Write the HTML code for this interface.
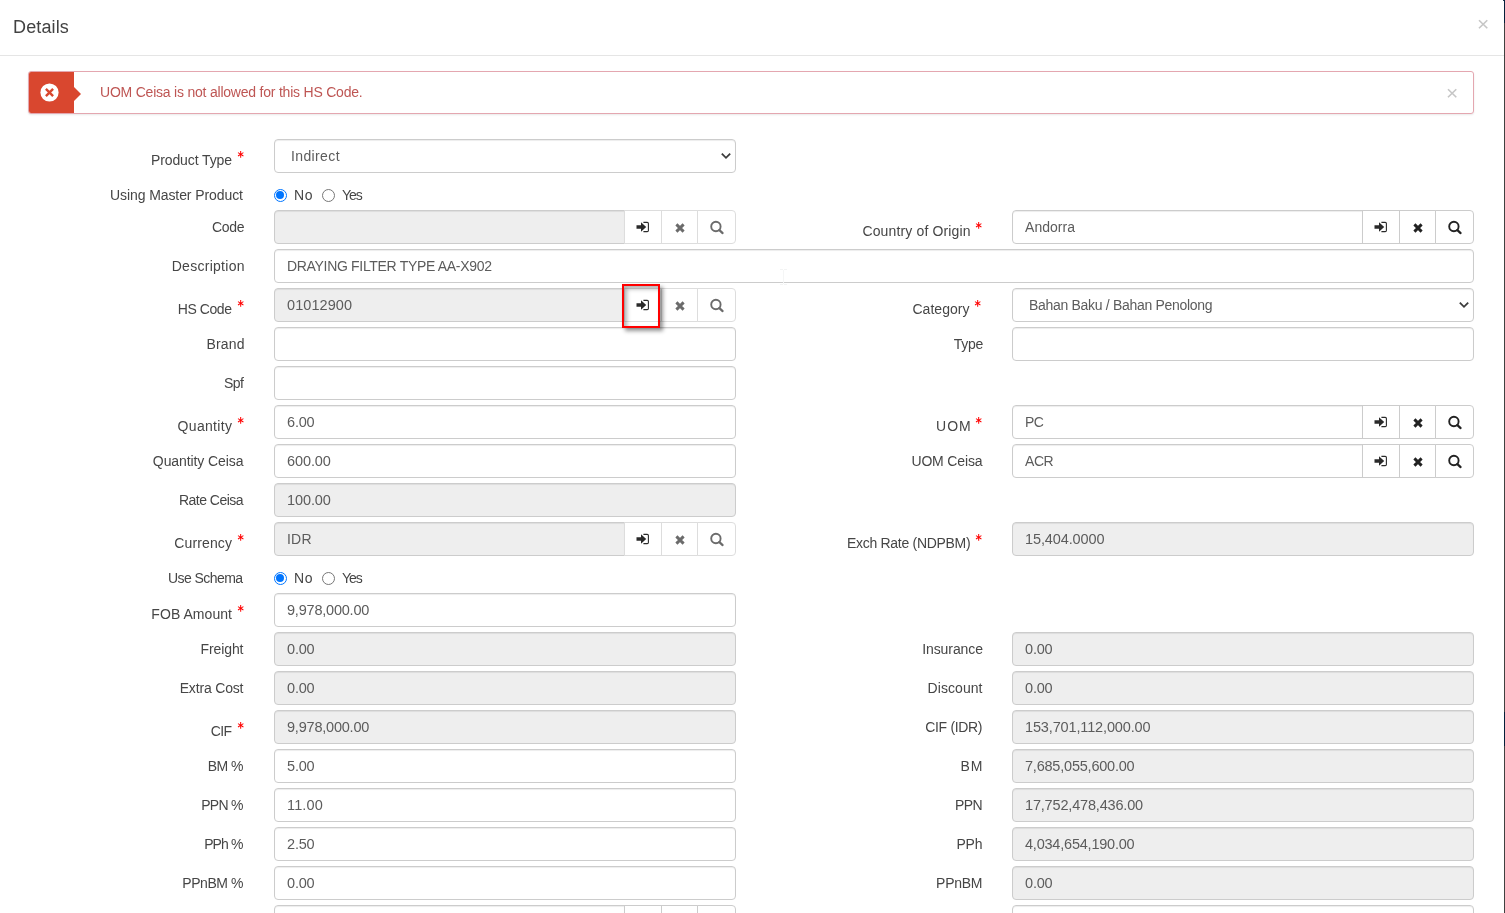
<!DOCTYPE html>
<html lang="en">
<head>
<meta charset="utf-8">
<title>Details</title>
<style>
*{box-sizing:border-box}
html,body{margin:0;padding:0}
body{width:1505px;height:913px;overflow:hidden;background:#fff;position:relative;font-family:"Liberation Sans",sans-serif;font-size:14px;color:#333;letter-spacing:0}
.edge{position:absolute;left:1504px;top:0;width:1px;height:913px;background:linear-gradient(#04203a 0,#04203a 23px,#404040 23px,#404040 712px,#04203a 712px,#04203a 746px,#404040 746px)}
.edge:before{content:"";position:absolute;left:-2px;top:0;width:2px;height:2px;background:radial-gradient(circle at 0 100%,transparent 1.6px,#04203a 2.2px)}
.hdr{position:absolute;left:0;top:0;width:1504px;height:56px;border-bottom:1px solid #e5e5e5}
.hdr h4{position:absolute;left:13px;top:16px;margin:0;font-size:18px;font-weight:400;line-height:22px;color:#424242;letter-spacing:0.13px}
.close{position:absolute;color:#c6c6c6;font-size:21px;line-height:20px;letter-spacing:0}
.alert{position:absolute;left:28px;top:71px;width:1446px;height:43px;border:1px solid #e4a7b0;border-radius:3px;background:#fff;box-shadow:0 1px 2px rgba(0,0,0,.09)}
.alert .blk{position:absolute;left:0;top:0;width:45px;height:41px;background:#d9472f;border-radius:2px 0 0 2px}
.alert .blk svg{position:absolute;left:11.4px;top:10.8px}
.alert .blk:after{content:"";position:absolute;left:45px;top:14.7px;border:7.35px solid transparent;border-left:7px solid #d9472f;border-right:0}
.alert .msg{position:absolute;left:71px;top:12px;line-height:16px;color:#be5553;white-space:nowrap;letter-spacing:-0.216px}
.lbl{position:absolute;text-align:right;white-space:nowrap;line-height:20px;color:#464646;margin:0}
.req{position:absolute;color:#f00;font-family:"DejaVu Sans",sans-serif;font-weight:bold;font-size:14.5px;line-height:16px;letter-spacing:0;transform:scaleX(.84);transform-origin:50% 50%}
.fc{position:absolute;height:34px;border:1px solid #ccc;border-radius:4px;background:#fff;padding:6px 12px;line-height:20px;color:#5c5c5c;white-space:nowrap;box-shadow:inset 0 1px 1px rgba(0,0,0,.075)}
.fc.dis{background:#eee}
.fc.grp{border-radius:4px 0 0 4px}
.fc.sel{padding-left:16px}
.fc.sel .car{position:absolute;right:3px;top:12.4px}
.btn{position:absolute;height:34px;border:1px solid #ccc;background:#fff;margin:0}
.btn svg{position:absolute;left:50%;top:50%}
.btn.last{border-radius:0 4px 4px 0}
.btn.gray{border-color:#ddd}
.rad{position:absolute;width:13px;height:13px;border:1.3px solid #767676;border-radius:50%;background:#fff}
.rad.on{border-color:#0075ff}
.rad.on:after{content:"";position:absolute;left:1.2px;top:1.2px;width:8px;height:8px;border-radius:50%;background:#0075ff}
.rt{position:absolute;line-height:20px;color:#464646}
.hl{position:absolute;left:622px;top:284px;width:38px;height:44px;border:2px solid #f00;box-shadow:3px 3px 4px rgba(0,0,0,.42),inset 3px 3px 4px rgba(0,0,0,.3)}
.ibeam{position:absolute;left:783px;top:270px;width:1px;height:14px;background:#f5f6f6}
.ibeam:before,.ibeam:after{content:"";position:absolute;left:-3px;width:7px;height:1px;background:linear-gradient(90deg,#f3f4f4 0,#f3f4f4 3px,transparent 3px,transparent 4px,#f3f4f4 4px)}
.ibeam:before{top:-1px}
.ibeam:after{top:14px}
.wrap{position:absolute;left:0;top:0;width:1505px;height:913px;will-change:transform}

</style>
</head>
<body>
<div class="wrap">
<div class="hdr"><h4>Details</h4><span class="close" style="left:1477px;top:13.5px">×</span></div>
<div class="alert"><div class="blk"><svg width="19" height="19" viewBox="0 0 19 19"><circle cx="9.5" cy="9.5" r="9.1" fill="#fff"/><path d="M5.9 5.9L13.1 13.1M13.1 5.9L5.9 13.1" stroke="#d9472f" stroke-width="2.4"/></svg></div><div class="msg">UOM Ceisa is not allowed for this HS Code.</div><span class="close" style="left:1417px;top:11px">×</span></div>
<label class="lbl" style="right:1273px;top:150px"><span style="letter-spacing:-0.109px;margin-right:0.109px">Product Type</span></label><span class="req" style="left:236.8px;top:147.6px">*</span>
<div class="fc sel" style="left:274px;top:139px;width:462px"><span style="letter-spacing:0.373px;margin-right:-0.373px">Indirect</span><svg class="car" width="12" height="8" viewBox="0 0 12 8"><path d="M1.8 1.6L6 5.8L10.2 1.6" fill="none" stroke="#3c3c3c" stroke-width="1.8"/></svg></div>
<label class="lbl" style="right:1262px;top:185px"><span style="letter-spacing:-0.085px;margin-right:0.085px">Using Master Product</span></label>
<div class="rad on" style="left:274px;top:189px"></div><div class="rt" style="left:294px;top:185px"><span style="letter-spacing:0.516px;margin-right:-0.516px">No</span></div>
<div class="rad" style="left:322px;top:189px"></div><div class="rt" style="left:342px;top:185px"><span style="letter-spacing:-1.086px;margin-right:1.086px">Yes</span></div>
<label class="lbl" style="right:1260.5px;top:217px"><span style="letter-spacing:-0.359px;margin-right:0.359px">Code</span></label>
<div class="fc dis grp" style="left:274px;top:210px;width:351px"></div>
<div class="btn gray" style="left:624px;top:210px;width:38px"><svg width="14" height="12" viewBox="0 0 14 12" style="margin:-6px 0 0 -6.8px"><path d="M0.5 4.2H5V1.2L10.2 6L5 10.8V7.8H0.5Z" fill="#2a2a2a"/><path d="M7.4 1.4H11.2Q12.4 1.4 12.4 2.6V9.4Q12.4 10.6 11.2 10.6H7.4" fill="none" stroke="#2a2a2a" stroke-width="1.1"/></svg></div>
<div class="btn gray" style="left:661px;top:210px;width:37px"><svg width="12" height="12" viewBox="0 0 12 12" style="margin:-5.5px 0 0 -6px"><path d="M2.4 2.4L9.6 9.6M9.6 2.4L2.4 9.6" stroke="#6b6b6b" stroke-width="2.9" fill="none"/></svg></div>
<div class="btn gray last" style="left:697px;top:210px;width:39px"><svg width="16" height="16" viewBox="0 0 16 16" style="margin:-6.9px 0 0 -8px"><circle cx="6.9" cy="6.5" r="4.7" fill="none" stroke="#6b6b6b" stroke-width="1.9"/><path d="M10.4 10.1L13.6 13.1" stroke="#6b6b6b" stroke-width="2.2" stroke-linecap="round"/></svg></div>
<label class="lbl" style="right:534.4px;top:221px"><span style="letter-spacing:0.150px;margin-right:-0.150px">Country of Origin</span></label><span class="req" style="left:975.0px;top:218.6px">*</span>
<div class="fc grp" style="left:1012px;top:210px;width:351px"><span style="letter-spacing:0.044px;margin-right:-0.044px">Andorra</span></div>
<div class="btn" style="left:1362px;top:210px;width:38px"><svg width="14" height="12" viewBox="0 0 14 12" style="margin:-6px 0 0 -6.8px"><path d="M0.5 4.2H5V1.2L10.2 6L5 10.8V7.8H0.5Z" fill="#2a2a2a"/><path d="M7.4 1.4H11.2Q12.4 1.4 12.4 2.6V9.4Q12.4 10.6 11.2 10.6H7.4" fill="none" stroke="#2a2a2a" stroke-width="1.1"/></svg></div>
<div class="btn" style="left:1399px;top:210px;width:37px"><svg width="12" height="12" viewBox="0 0 12 12" style="margin:-5.5px 0 0 -6px"><path d="M2.4 2.4L9.6 9.6M9.6 2.4L2.4 9.6" stroke="#222" stroke-width="2.9" fill="none"/></svg></div>
<div class="btn last" style="left:1435px;top:210px;width:39px"><svg width="16" height="16" viewBox="0 0 16 16" style="margin:-6.9px 0 0 -8px"><circle cx="6.9" cy="6.5" r="4.7" fill="none" stroke="#222" stroke-width="1.9"/><path d="M10.4 10.1L13.6 13.1" stroke="#222" stroke-width="2.2" stroke-linecap="round"/></svg></div>
<label class="lbl" style="right:1260.5px;top:256px"><span style="letter-spacing:0.275px;margin-right:-0.275px">Description</span></label>
<div class="fc" style="left:274px;top:249px;width:1200px"><span style="letter-spacing:-0.317px;margin-right:0.317px">DRAYING FILTER TYPE AA-X902</span></div>
<label class="lbl" style="right:1273px;top:299px"><span style="letter-spacing:-0.427px;margin-right:0.427px">HS Code</span></label><span class="req" style="left:236.8px;top:296.6px">*</span>
<div class="fc dis grp" style="left:274px;top:288px;width:351px"><span style="font-size:14.5px;letter-spacing:0.064px;margin-right:-0.064px">01012900</span></div>
<div class="btn gray" style="left:624px;top:288px;width:38px"><svg width="14" height="12" viewBox="0 0 14 12" style="margin:-6px 0 0 -6.8px"><path d="M0.5 4.2H5V1.2L10.2 6L5 10.8V7.8H0.5Z" fill="#2a2a2a"/><path d="M7.4 1.4H11.2Q12.4 1.4 12.4 2.6V9.4Q12.4 10.6 11.2 10.6H7.4" fill="none" stroke="#2a2a2a" stroke-width="1.1"/></svg></div>
<div class="btn gray" style="left:661px;top:288px;width:37px"><svg width="12" height="12" viewBox="0 0 12 12" style="margin:-5.5px 0 0 -6px"><path d="M2.4 2.4L9.6 9.6M9.6 2.4L2.4 9.6" stroke="#6b6b6b" stroke-width="2.9" fill="none"/></svg></div>
<div class="btn gray last" style="left:697px;top:288px;width:39px"><svg width="16" height="16" viewBox="0 0 16 16" style="margin:-6.9px 0 0 -8px"><circle cx="6.9" cy="6.5" r="4.7" fill="none" stroke="#6b6b6b" stroke-width="1.9"/><path d="M10.4 10.1L13.6 13.1" stroke="#6b6b6b" stroke-width="2.2" stroke-linecap="round"/></svg></div>
<label class="lbl" style="right:535.4px;top:299px"><span style="letter-spacing:0.058px;margin-right:-0.058px">Category</span></label><span class="req" style="left:974.0px;top:296.6px">*</span>
<div class="fc sel" style="left:1012px;top:288px;width:462px"><span style="letter-spacing:-0.306px;margin-right:0.306px">Bahan Baku / Bahan Penolong</span><svg class="car" width="12" height="8" viewBox="0 0 12 8"><path d="M1.8 1.6L6 5.8L10.2 1.6" fill="none" stroke="#3c3c3c" stroke-width="1.8"/></svg></div>
<label class="lbl" style="right:1260.5px;top:334px"><span style="letter-spacing:0.160px;margin-right:-0.160px">Brand</span></label>
<div class="fc" style="left:274px;top:327px;width:462px"></div>
<label class="lbl" style="right:521.8px;top:334px"><span style="letter-spacing:-0.281px;margin-right:0.281px">Type</span></label>
<div class="fc" style="left:1012px;top:327px;width:462px"></div>
<label class="lbl" style="right:1261.0px;top:373px"><span style="letter-spacing:-0.461px;margin-right:0.461px">Spf</span></label>
<div class="fc" style="left:274px;top:366px;width:462px"></div>
<label class="lbl" style="right:1273px;top:416px"><span style="letter-spacing:0.330px;margin-right:-0.330px">Quantity</span></label><span class="req" style="left:236.8px;top:413.6px">*</span>
<div class="fc" style="left:274px;top:405px;width:462px"><span style="font-size:14.5px;letter-spacing:-0.184px;margin-right:0.184px">6.00</span></div>
<label class="lbl" style="right:534.4px;top:416px"><span style="letter-spacing:0.922px;margin-right:-0.922px">UOM</span></label><span class="req" style="left:975.0px;top:413.6px">*</span>
<div class="fc grp" style="left:1012px;top:405px;width:351px"><span style="letter-spacing:-0.687px;margin-right:0.687px">PC</span></div>
<div class="btn" style="left:1362px;top:405px;width:38px"><svg width="14" height="12" viewBox="0 0 14 12" style="margin:-6px 0 0 -6.8px"><path d="M0.5 4.2H5V1.2L10.2 6L5 10.8V7.8H0.5Z" fill="#2a2a2a"/><path d="M7.4 1.4H11.2Q12.4 1.4 12.4 2.6V9.4Q12.4 10.6 11.2 10.6H7.4" fill="none" stroke="#2a2a2a" stroke-width="1.1"/></svg></div>
<div class="btn" style="left:1399px;top:405px;width:37px"><svg width="12" height="12" viewBox="0 0 12 12" style="margin:-5.5px 0 0 -6px"><path d="M2.4 2.4L9.6 9.6M9.6 2.4L2.4 9.6" stroke="#222" stroke-width="2.9" fill="none"/></svg></div>
<div class="btn last" style="left:1435px;top:405px;width:39px"><svg width="16" height="16" viewBox="0 0 16 16" style="margin:-6.9px 0 0 -8px"><circle cx="6.9" cy="6.5" r="4.7" fill="none" stroke="#222" stroke-width="1.9"/><path d="M10.4 10.1L13.6 13.1" stroke="#222" stroke-width="2.2" stroke-linecap="round"/></svg></div>
<label class="lbl" style="right:1261.5px;top:451px"><span style="letter-spacing:-0.089px;margin-right:0.089px">Quantity Ceisa</span></label>
<div class="fc" style="left:274px;top:444px;width:462px"><span style="font-size:14.5px;letter-spacing:-0.090px;margin-right:0.090px">600.00</span></div>
<label class="lbl" style="right:522.5px;top:451px"><span style="letter-spacing:-0.160px;margin-right:0.160px">UOM Ceisa</span></label>
<div class="fc grp" style="left:1012px;top:444px;width:351px"><span style="letter-spacing:-0.459px;margin-right:0.459px">ACR</span></div>
<div class="btn" style="left:1362px;top:444px;width:38px"><svg width="14" height="12" viewBox="0 0 14 12" style="margin:-6px 0 0 -6.8px"><path d="M0.5 4.2H5V1.2L10.2 6L5 10.8V7.8H0.5Z" fill="#2a2a2a"/><path d="M7.4 1.4H11.2Q12.4 1.4 12.4 2.6V9.4Q12.4 10.6 11.2 10.6H7.4" fill="none" stroke="#2a2a2a" stroke-width="1.1"/></svg></div>
<div class="btn" style="left:1399px;top:444px;width:37px"><svg width="12" height="12" viewBox="0 0 12 12" style="margin:-5.5px 0 0 -6px"><path d="M2.4 2.4L9.6 9.6M9.6 2.4L2.4 9.6" stroke="#222" stroke-width="2.9" fill="none"/></svg></div>
<div class="btn last" style="left:1435px;top:444px;width:39px"><svg width="16" height="16" viewBox="0 0 16 16" style="margin:-6.9px 0 0 -8px"><circle cx="6.9" cy="6.5" r="4.7" fill="none" stroke="#222" stroke-width="1.9"/><path d="M10.4 10.1L13.6 13.1" stroke="#222" stroke-width="2.2" stroke-linecap="round"/></svg></div>
<label class="lbl" style="right:1261.5px;top:490px"><span style="letter-spacing:-0.531px;margin-right:0.531px">Rate Ceisa</span></label>
<div class="fc dis" style="left:274px;top:483px;width:462px"><span style="font-size:14.5px;letter-spacing:-0.090px;margin-right:0.090px">100.00</span></div>
<label class="lbl" style="right:1273px;top:533px"><span style="letter-spacing:0.124px;margin-right:-0.124px">Currency</span></label><span class="req" style="left:236.8px;top:530.6px">*</span>
<div class="fc dis grp" style="left:274px;top:522px;width:351px"><span style="letter-spacing:0.210px;margin-right:-0.210px">IDR</span></div>
<div class="btn gray" style="left:624px;top:522px;width:38px"><svg width="14" height="12" viewBox="0 0 14 12" style="margin:-6px 0 0 -6.8px"><path d="M0.5 4.2H5V1.2L10.2 6L5 10.8V7.8H0.5Z" fill="#2a2a2a"/><path d="M7.4 1.4H11.2Q12.4 1.4 12.4 2.6V9.4Q12.4 10.6 11.2 10.6H7.4" fill="none" stroke="#2a2a2a" stroke-width="1.1"/></svg></div>
<div class="btn gray" style="left:661px;top:522px;width:37px"><svg width="12" height="12" viewBox="0 0 12 12" style="margin:-5.5px 0 0 -6px"><path d="M2.4 2.4L9.6 9.6M9.6 2.4L2.4 9.6" stroke="#6b6b6b" stroke-width="2.9" fill="none"/></svg></div>
<div class="btn gray last" style="left:697px;top:522px;width:39px"><svg width="16" height="16" viewBox="0 0 16 16" style="margin:-6.9px 0 0 -8px"><circle cx="6.9" cy="6.5" r="4.7" fill="none" stroke="#6b6b6b" stroke-width="1.9"/><path d="M10.4 10.1L13.6 13.1" stroke="#6b6b6b" stroke-width="2.2" stroke-linecap="round"/></svg></div>
<label class="lbl" style="right:534.4px;top:533px"><span style="letter-spacing:-0.298px;margin-right:0.298px">Exch Rate (NDPBM)</span></label><span class="req" style="left:975.0px;top:530.6px">*</span>
<div class="fc dis" style="left:1012px;top:522px;width:462px"><span style="font-size:14.5px;letter-spacing:-0.108px;margin-right:0.108px">15,404.0000</span></div>
<label class="lbl" style="right:1262px;top:568px"><span style="letter-spacing:-0.582px;margin-right:0.582px">Use Schema</span></label>
<div class="rad on" style="left:274px;top:572px"></div><div class="rt" style="left:294px;top:568px"><span style="letter-spacing:0.516px;margin-right:-0.516px">No</span></div>
<div class="rad" style="left:322px;top:572px"></div><div class="rt" style="left:342px;top:568px"><span style="letter-spacing:-1.086px;margin-right:1.086px">Yes</span></div>
<label class="lbl" style="right:1273px;top:604px"><span style="letter-spacing:0.054px;margin-right:-0.054px">FOB Amount</span></label><span class="req" style="left:236.8px;top:601.6px">*</span>
<div class="fc" style="left:274px;top:593px;width:462px"><span style="font-size:14.5px;letter-spacing:-0.211px;margin-right:0.211px">9,978,000.00</span></div>
<label class="lbl" style="right:1261.5px;top:639px"><span style="letter-spacing:-0.115px;margin-right:0.115px">Freight</span></label>
<div class="fc dis" style="left:274px;top:632px;width:462px"><span style="font-size:14.5px;letter-spacing:-0.184px;margin-right:0.184px">0.00</span></div>
<label class="lbl" style="right:522.0px;top:639px"><span style="letter-spacing:-0.085px;margin-right:0.085px">Insurance</span></label>
<div class="fc dis" style="left:1012px;top:632px;width:462px"><span style="font-size:14.5px;letter-spacing:-0.184px;margin-right:0.184px">0.00</span></div>
<label class="lbl" style="right:1261.5px;top:678px"><span style="letter-spacing:-0.168px;margin-right:0.168px">Extra Cost</span></label>
<div class="fc dis" style="left:274px;top:671px;width:462px"><span style="font-size:14.5px;letter-spacing:-0.184px;margin-right:0.184px">0.00</span></div>
<label class="lbl" style="right:522.5px;top:678px"><span style="letter-spacing:0.071px;margin-right:-0.071px">Discount</span></label>
<div class="fc dis" style="left:1012px;top:671px;width:462px"><span style="font-size:14.5px;letter-spacing:-0.184px;margin-right:0.184px">0.00</span></div>
<label class="lbl" style="right:1273px;top:721px"><span style="letter-spacing:-0.680px;margin-right:0.680px">CIF</span></label><span class="req" style="left:236.8px;top:718.6px">*</span>
<div class="fc dis" style="left:274px;top:710px;width:462px"><span style="font-size:14.5px;letter-spacing:-0.211px;margin-right:0.211px">9,978,000.00</span></div>
<label class="lbl" style="right:522.5px;top:717px"><span style="letter-spacing:-0.328px;margin-right:0.328px">CIF (IDR)</span></label>
<div class="fc dis" style="left:1012px;top:710px;width:462px"><span style="font-size:14.5px;letter-spacing:-0.142px;margin-right:0.142px">153,701,112,000.00</span></div>
<label class="lbl" style="right:1261.5px;top:756px"><span style="letter-spacing:-0.495px;margin-right:0.495px">BM %</span></label>
<div class="fc" style="left:274px;top:749px;width:462px"><span style="font-size:14.5px;letter-spacing:-0.184px;margin-right:0.184px">5.00</span></div>
<label class="lbl" style="right:522.5px;top:756px"><span style="letter-spacing:1.062px;margin-right:-1.062px">BM</span></label>
<div class="fc dis" style="left:1012px;top:749px;width:462px"><span style="font-size:14.5px;letter-spacing:-0.214px;margin-right:0.214px">7,685,055,600.00</span></div>
<label class="lbl" style="right:1261.5px;top:795px"><span style="letter-spacing:-0.703px;margin-right:0.703px">PPN %</span></label>
<div class="fc" style="left:274px;top:788px;width:462px"><span style="font-size:14.5px;letter-spacing:0.146px;margin-right:-0.146px">11.00</span></div>
<label class="lbl" style="right:522.5px;top:795px"><span style="letter-spacing:-0.641px;margin-right:0.641px">PPN</span></label>
<div class="fc dis" style="left:1012px;top:788px;width:462px"><span style="font-size:14.5px;letter-spacing:-0.178px;margin-right:0.178px">17,752,478,436.00</span></div>
<label class="lbl" style="right:1261.5px;top:834px"><span style="letter-spacing:-0.855px;margin-right:0.855px">PPh %</span></label>
<div class="fc" style="left:274px;top:827px;width:462px"><span style="font-size:14.5px;letter-spacing:-0.184px;margin-right:0.184px">2.50</span></div>
<label class="lbl" style="right:522.5px;top:834px"><span style="letter-spacing:-0.238px;margin-right:0.238px">PPh</span></label>
<div class="fc dis" style="left:1012px;top:827px;width:462px"><span style="font-size:14.5px;letter-spacing:-0.214px;margin-right:0.214px">4,034,654,190.00</span></div>
<label class="lbl" style="right:1261.5px;top:873px"><span style="letter-spacing:-0.432px;margin-right:0.432px">PPnBM %</span></label>
<div class="fc" style="left:274px;top:866px;width:462px"><span style="font-size:14.5px;letter-spacing:-0.184px;margin-right:0.184px">0.00</span></div>
<label class="lbl" style="right:522.5px;top:873px"><span style="letter-spacing:-0.262px;margin-right:0.262px">PPnBM</span></label>
<div class="fc dis" style="left:1012px;top:866px;width:462px"><span style="font-size:14.5px;letter-spacing:-0.184px;margin-right:0.184px">0.00</span></div>
<div class="fc grp" style="left:274px;top:905px;width:351px"></div>
<div class="btn" style="left:624px;top:905px;width:38px"><svg width="14" height="12" viewBox="0 0 14 12" style="margin:-6px 0 0 -6.8px"><path d="M0.5 4.2H5V1.2L10.2 6L5 10.8V7.8H0.5Z" fill="#2a2a2a"/><path d="M7.4 1.4H11.2Q12.4 1.4 12.4 2.6V9.4Q12.4 10.6 11.2 10.6H7.4" fill="none" stroke="#2a2a2a" stroke-width="1.1"/></svg></div>
<div class="btn" style="left:661px;top:905px;width:37px"><svg width="12" height="12" viewBox="0 0 12 12" style="margin:-5.5px 0 0 -6px"><path d="M2.4 2.4L9.6 9.6M9.6 2.4L2.4 9.6" stroke="#222" stroke-width="2.9" fill="none"/></svg></div>
<div class="btn last" style="left:697px;top:905px;width:39px"><svg width="16" height="16" viewBox="0 0 16 16" style="margin:-6.9px 0 0 -8px"><circle cx="6.9" cy="6.5" r="4.7" fill="none" stroke="#222" stroke-width="1.9"/><path d="M10.4 10.1L13.6 13.1" stroke="#222" stroke-width="2.2" stroke-linecap="round"/></svg></div>
<div class="fc" style="left:1012px;top:905px;width:462px"></div>
<div class="hl"></div>
<div class="ibeam"></div>
<div class="edge"></div>
</div>
</body>
</html>
